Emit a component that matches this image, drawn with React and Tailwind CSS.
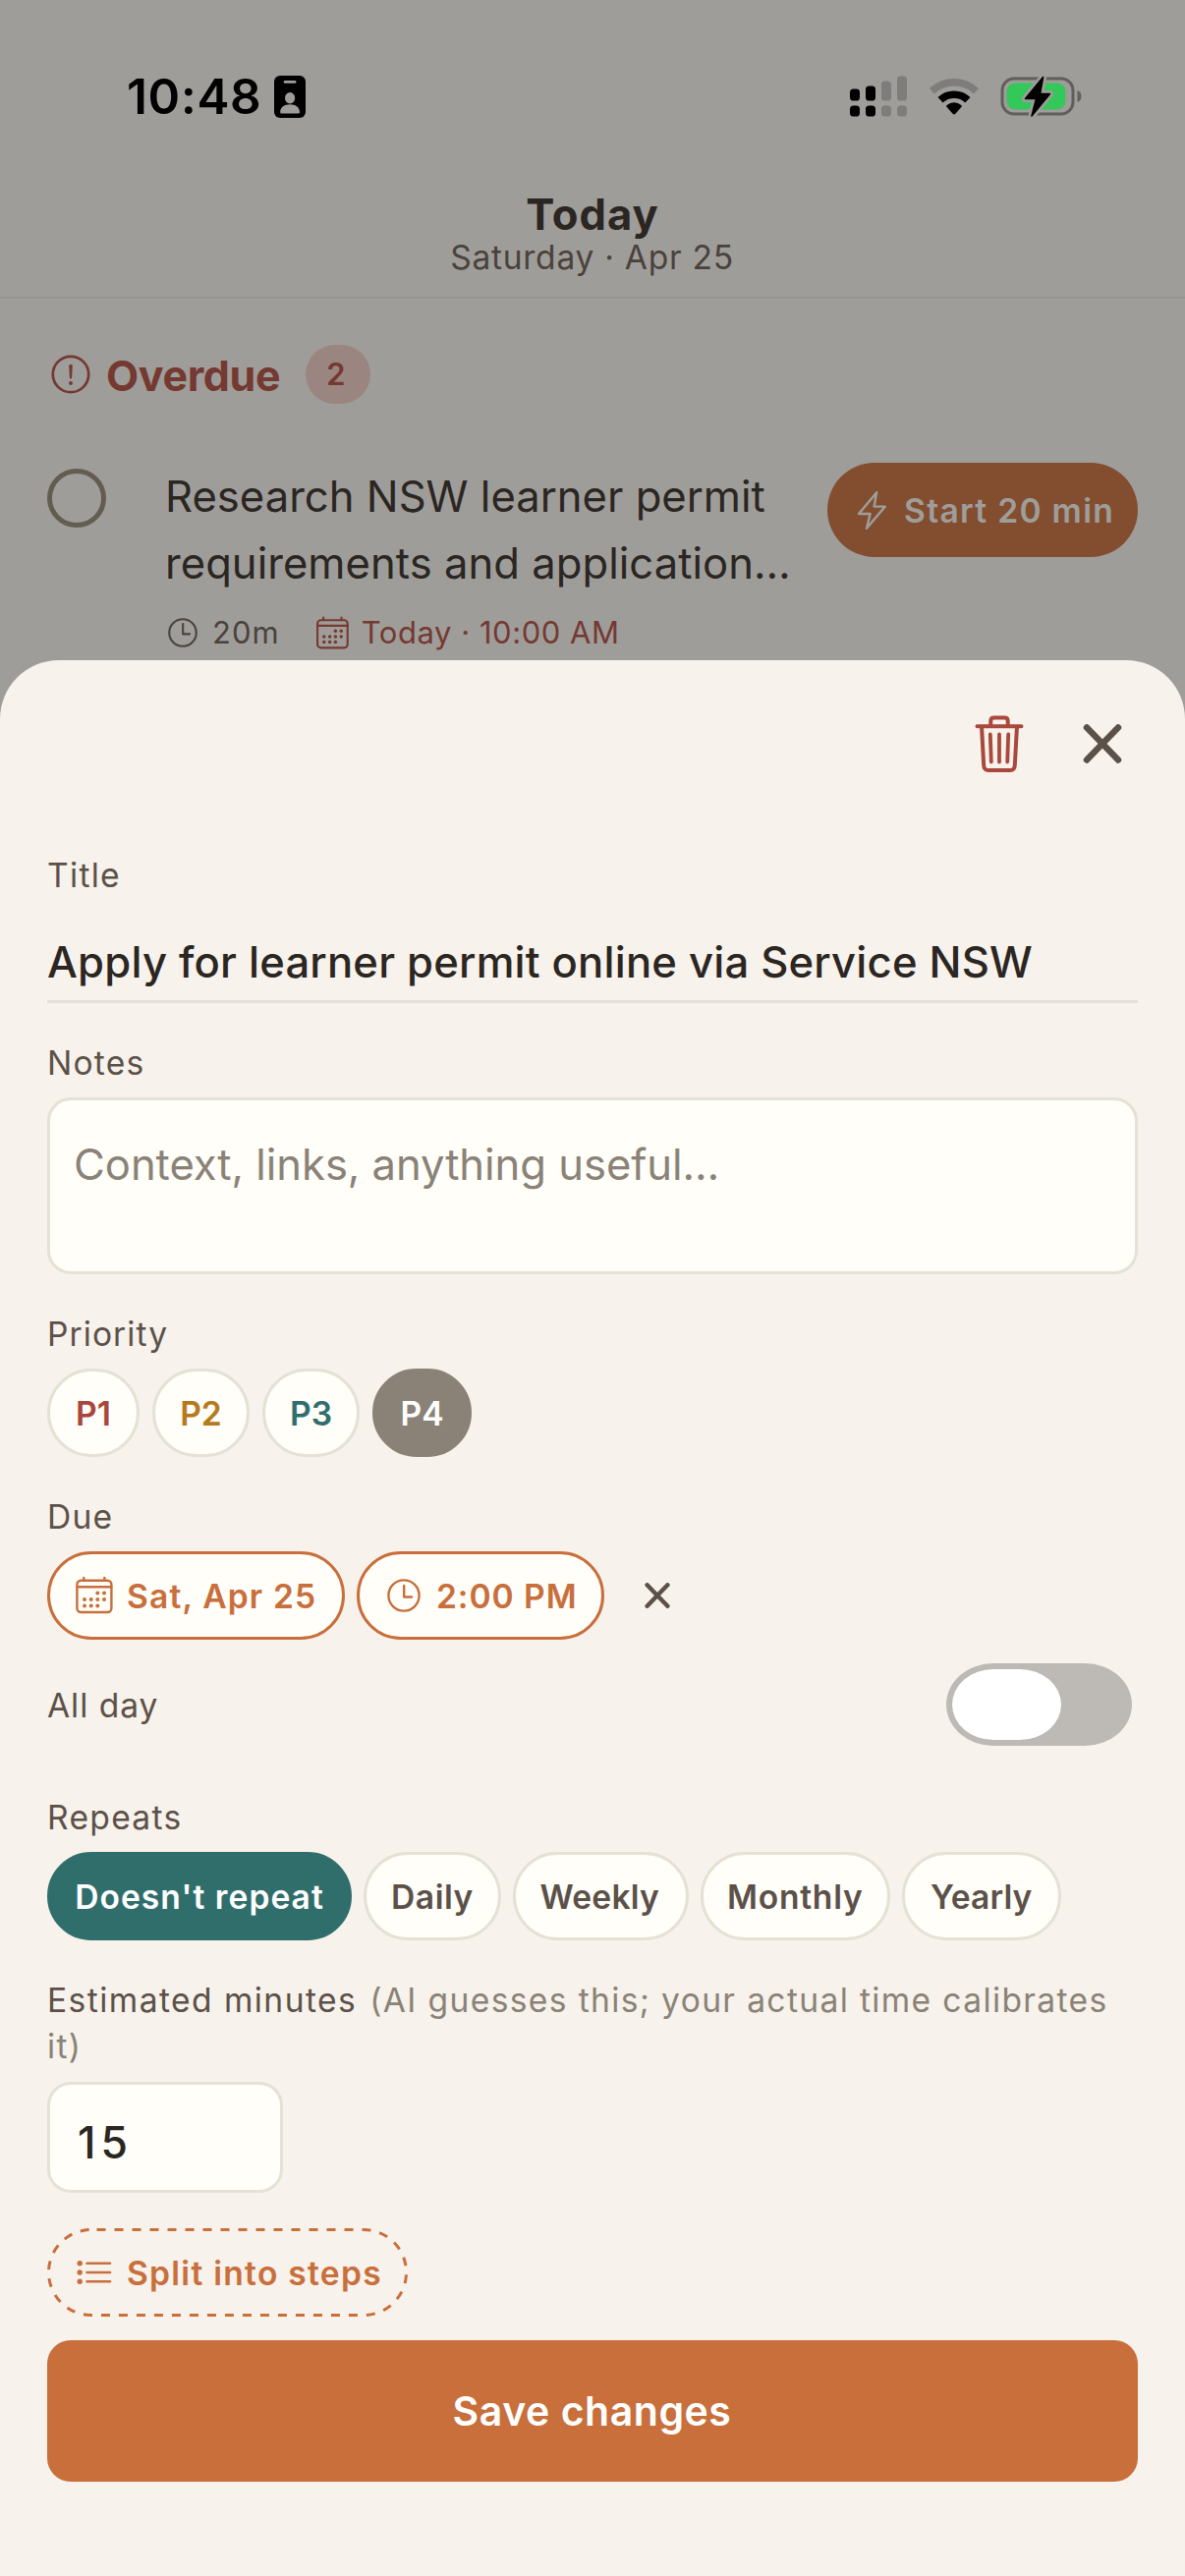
import React from "react";

function CalendarIcon({ className }) {
  return (
    <svg viewBox="0 0 40 40" className={className} fill="none" stroke="currentColor" strokeWidth="2.4">
      <rect x="2.4" y="4.8" width="35" height="32.2" rx="4" />
      <path d="M2.4 11.3h35M9.3 1.9v2.9M30.3 1.9v2.9" strokeLinecap="round" />
      <g fill="currentColor" stroke="none">
        {[[23.3, 17.4], [30, 17.4], [10, 24], [16.7, 24], [23.3, 24], [30, 24], [10, 30.4], [16.7, 30.4], [23.3, 30.4]].map(
          ([x, y]) => (
            <circle key={`${x}-${y}`} cx={x} cy={y} r="2" />
          )
        )}
      </g>
    </svg>
  );
}

function ClockIcon({ className }) {
  return (
    <svg viewBox="0 0 34 34" className={className} fill="none" stroke="currentColor" strokeWidth="2.4" strokeLinecap="round" strokeLinejoin="round">
      <circle cx="17" cy="17" r="15.6" />
      <path d="M17.2 7v11.5h7.8" />
    </svg>
  );
}

function CloseIcon({ className, strokeWidth }) {
  return (
    <svg viewBox="0 0 40 40" className={className} fill="none" stroke="currentColor" strokeWidth={strokeWidth} strokeLinecap="round">
      <path d="M4 3.5l32 33M36 3.5l-32 33" />
    </svg>
  );
}

function StatusBar() {
  return (
    <div className="flex h-[196px] items-center pl-[129px] pr-[104px] text-black">
      <span className="text-[49.5px] leading-[60px] font-semibold tracking-[0.67px]">10:48</span>
      <svg viewBox="0 0 32 43" className="ml-[13px] h-[43px] w-8">
        <rect width="32" height="43" rx="6" />
        <g fill="#9f9d9a">
          <rect x="9.7" y="5" width="12.8" height="2.8" rx="1.4" />
          <ellipse cx="16.1" cy="22.7" rx="5.1" ry="5.7" />
          <path d="M6.2 37c0-5 4.5-7.7 9.9-7.7S26 32 26 37c0 1-.6 1.6-1.6 1.6H7.8c-1 0-1.6-.6-1.6-1.6z" />
        </g>
      </svg>
      <svg viewBox="0 0 58 42" className="ml-auto h-[42px] w-[58px]">
        <g>
          <rect x="0" y="13.5" width="10" height="12" rx="3.6" />
          <rect x="16" y="10.5" width="10" height="15" rx="3.6" />
          <rect x="0" y="30.5" width="10" height="11" rx="3.6" />
          <rect x="16" y="30.5" width="10" height="11" rx="3.6" />
        </g>
        <g fill="#7f7d7b">
          <rect x="32" y="5.5" width="10" height="20" rx="3.6" />
          <rect x="48" y="0.5" width="10" height="25" rx="3.6" />
          <rect x="32" y="30.5" width="10" height="11" rx="3.6" />
          <rect x="48" y="30.5" width="10" height="11" rx="3.6" />
        </g>
      </svg>
      <svg viewBox="0 0 50 38" className="ml-[23px] h-[38px] w-[50px]" fill="none" strokeWidth="7.6">
        <path d="M2.4 13.7A33.2 33.2 0 0 1 47.6 13.7" stroke="#7f7d7b" />
        <path d="M11.1 22.7A20.4 20.4 0 0 1 38.9 22.7" stroke="#000" />
        <path d="M25 37.5c-.6 0-1-.3-1.4-.7l-6-6.8c-.7-.8-.6-1.5.1-2.1a11.5 11.5 0 0 1 14.6 0c.7.6.8 1.3.1 2.1l-6 6.8c-.4.4-.8.7-1.4.7z" fill="#000" />
      </svg>
      <svg viewBox="0 0 84 44" className="ml-[22px] h-11 w-[84px]">
        <rect x="2" y="4" width="72" height="36" rx="12" fill="none" stroke="#615f5d" strokeWidth="3" />
        <rect x="6.5" y="8.5" width="60" height="27" rx="8.5" fill="#34c759" />
        <path d="M78.5 16c2.6 1 4 3.3 4 6s-1.400 5-4 6z" fill="#615f5d" />
        <path d="M43.6 2.5L25.5 24.5h11L32 42l18.5-22.5H40.5z" fill="#000" stroke="#9f9d9a" strokeWidth="7" strokeLinejoin="round" />
        <path d="M43.6 2.5L25.5 24.5h11L32 42l18.5-22.5H40.5z" fill="#000" stroke="#000" strokeWidth="1.6" strokeLinejoin="round" />
      </svg>
    </div>
  );
}

function TodayScreen() {
  return (
    <div className="flex h-[672px] flex-col">
      <StatusBar />
      <header className="flex h-[108px] flex-col items-center border-b-2 border-[#969491] pt-px">
        <h1 className="text-[43.6px] leading-[44px] font-bold tracking-[1px] text-[#2b2622]">Today</h1>
        <p className="-mt-px pr-px text-[33.6px] leading-[44px] tracking-[0.72px] text-[#4a423c]">Saturday · Apr 25</p>
      </header>
      <div className="mt-[47px] flex h-[60px] items-center pl-[52px] text-[#743931]">
        <svg viewBox="0 0 40 40" className="size-10" fill="none" stroke="currentColor">
          <circle cx="20" cy="20" r="18.2" strokeWidth="2.7" />
          <path d="M18.2 11.5a1.8 1.8 0 0 1 3.6 0l-.7 12a1.1 1.1 0 0 1-2.2 0z" fill="currentColor" stroke="none" />
          <circle cx="20" cy="29" r="1.9" fill="currentColor" stroke="none" />
        </svg>
        <h2 className="ml-4 w-[177px] pt-px text-[43px] leading-[60px] font-bold tracking-[-0.35px] whitespace-nowrap">Overdue</h2>
        <span className="ml-[26px] flex h-[60px] w-[66px] items-center justify-center rounded-full bg-[#9b8580] pr-1 text-[31px] font-semibold">2</span>
      </div>
      <div className="mt-[60px] flex items-start pl-12 pr-12">
        <span className="mt-1.5 size-[60px] shrink-0 rounded-full border-5 border-[#635c51]" />
        <div className="ml-[60px] w-[673px] shrink-0 pt-px">
          <p className="text-[43.6px] leading-[68px] whitespace-nowrap text-[#2b2622]">
            <span className="block">Research NSW learner permit</span>
            <span className="block tracking-[0.02px]">requirements and application…</span>
          </p>
          <div className="mt-4 flex h-10 items-center pl-[3px] text-[31px] leading-10 text-[#4a423c]">
            <ClockIcon className="size-[30px]" />
            <span className="ml-[15px] tracking-[1.02px]">20m</span>
            <span className="ml-9 flex items-center text-[#743931]">
              <CalendarIcon className="size-[35px]" />
              <span className="ml-3 tracking-[0.54px]">Today · 10:00 AM</span>
            </span>
          </div>
        </div>
        <button className="ml-auto flex h-24 w-[316px] shrink-0 items-center rounded-full bg-[#824e2f] pl-[30px] text-[#9f9d9a]">
          <svg viewBox="0 0 32 42" className="h-[42px] w-8" fill="none" stroke="currentColor" strokeWidth="2.4" strokeLinejoin="round">
            <path d="M20.2 3.2L2 25h11.6L10 39.8 28.8 17.6H17.6z" />
          </svg>
          <span className="ml-4 pt-px text-[33.6px] leading-10 font-semibold tracking-[1.3px] whitespace-nowrap">Start 20 min</span>
        </button>
      </div>
    </div>
  );
}

function Label({ className, children }) {
  return <label className={`block text-[33.6px] leading-[46px] text-[#5c5149] ${className}`}>{children}</label>;
}

const priorities = [
  { name: "P1", style: "w-[94px] border-[#e5e1d5] bg-[#fffef9] text-[#a8483d]" },
  { name: "P2", style: "w-[99px] border-[#e5e1d5] bg-[#fffef9] text-[#b57a20]" },
  { name: "P3", style: "w-[99px] border-[#e5e1d5] bg-[#fffef9] text-[#2f6e6c]" },
  { name: "P4", style: "w-[101px] border-[#8b8277] bg-[#8b8277] text-white" },
];

const repeats = [
  { name: "Doesn't repeat", style: "w-[310px] border-[#306e6c] bg-[#306e6c] text-white tracking-[1.05px]" },
  { name: "Daily", style: "w-[140px] border-[#e5e1d5] bg-[#fffef9] text-[#5c5149] tracking-[0.53px]" },
  { name: "Weekly", style: "w-[178.5px] border-[#e5e1d5] bg-[#fffef9] text-[#5c5149] tracking-[0.2px] pr-0.5" },
  { name: "Monthly", style: "w-[193.5px] border-[#e5e1d5] bg-[#fffef9] text-[#5c5149] tracking-[0.75px]" },
  { name: "Yearly", style: "w-[161.5px] border-[#e5e1d5] bg-[#fffef9] text-[#5c5149] tracking-[0.1px]" },
];

function Chip({ style, children }) {
  return (
    <button className={`flex h-[90px] items-center justify-center rounded-full border-3 pt-0.5 text-[33.6px] leading-10 font-semibold whitespace-nowrap ${style}`}>
      {children}
    </button>
  );
}

function EditSheet() {
  return (
    <section className="flex h-[1950px] flex-col rounded-t-[60px] bg-[#f7f2eb] px-12">
      <div className="flex h-[170px] shrink-0 items-center justify-end pr-4">
        <svg viewBox="0 0 50 60" className="h-[60px] w-[50px] text-[#a9493e]" fill="none" stroke="currentColor" strokeWidth="4" strokeLinecap="round" strokeLinejoin="round">
          <path d="M2.5 12.2h45M7 12.2l2.2 39.8c.2 3.3 1.7 5 4.6 5h22.4c2.900 0 4.400-1.700 4.600-5L43 12.2M16.300 12V7c0-2 1.200-3.400 3.400-3.400h10.600c2.200 0 3.400 1.400 3.400 3.400v5" />
          <path d="M15.8 20.500l1 28M25 20.500v28M34.200 20.500l-1 28" strokeWidth="3.800" />
        </svg>
        <CloseIcon className="ml-[60px] size-10 text-[#5c5149]" strokeWidth={6.5} />
      </div>

      <Label className="mt-[26px] tracking-[1.3px]">Title</Label>
      <div className="border-b-3 border-[#e5e1d5] pt-9 pb-2 text-[43.6px] leading-[60px] font-medium tracking-[0.2px] whitespace-nowrap text-[#2b2622]">
        Apply for learner permit online via Service NSW
      </div>

      <Label className="mt-[38px] tracking-[1.2px]">Notes</Label>
      <div className="mt-3 h-[180px] rounded-3xl border-3 border-[#e5e1d5] bg-[#fffef9] pt-9 pl-6 text-[43.6px] leading-[60px] tracking-[-0.05px] text-[#8b8277]">
        Context, links, anything useful…
      </div>

      <Label className="mt-[38px] tracking-[1.05px]">Priority</Label>
      <div className="mt-3 flex gap-[13px]">
        {priorities.map((p) => (
          <Chip key={p.name} style={p.style}>{p.name}</Chip>
        ))}
      </div>

      <Label className="mt-[38px] tracking-[1.21px]">Due</Label>
      <div className="mt-3 flex items-center text-[33.6px] leading-10 font-semibold text-[#c86f3c]">
        <button className="flex h-[90px] w-[303px] items-center rounded-full border-3 border-[#c86f3c] bg-[#fffef9] pl-[25px]">
          <CalendarIcon className="size-10" />
          <span className="ml-[13px] pt-0.5 tracking-[1.14px] whitespace-nowrap">Sat, Apr 25</span>
        </button>
        <button className="ml-3 flex h-[90px] w-[252px] items-center rounded-full border-3 border-[#c86f3c] bg-[#fffef9] pl-7">
          <ClockIcon className="size-[34px]" />
          <span className="ml-4 pt-0.5 tracking-[0.93px] whitespace-nowrap">2:00 PM</span>
        </button>
        <CloseIcon className="ml-[41px] size-[26px] text-[#5c5149]" strokeWidth={6.8} />
      </div>

      <div className="mt-6 flex h-[84px] items-center justify-between pr-1.5">
        <Label className="pt-0.5 tracking-[0.95px]">All day</Label>
        <button className="flex h-[84px] w-[189px] items-center rounded-[48px/42px] bg-[#bdb9b4] pl-1.5">
          <span className="h-[72px] w-[111px] rounded-[42px/36px] bg-white" />
        </button>
      </div>

      <Label className="mt-[50px] tracking-[1.3px]">Repeats</Label>
      <div className="mt-3 flex gap-3">
        {repeats.map((r) => (
          <Chip key={r.name} style={r.style}>{r.name}</Chip>
        ))}
      </div>

      <label className="mt-[37px] block text-[33.6px] leading-[47px] text-[#8b8277]">
        <span className="flex gap-[13px] whitespace-nowrap">
          <span className="tracking-[1.44px] text-[#5c5149]">Estimated minutes</span>
          <span className="tracking-[1.36px]">(AI guesses this; your actual time calibrates</span>
        </span>
        <span className="block tracking-[1.36px]">it)</span>
      </label>
      <div className="mt-[13px] flex h-[113px] w-60 items-center rounded-3xl border-3 border-[#e5e1d5] bg-[#fffef9] pt-[10px] pl-7 text-[44.5px] leading-[60px] font-medium tracking-[5px] text-[#2b2622]">
        15
      </div>

      <button className="relative mt-9 flex h-[90px] w-[367px] shrink-0 items-center pl-7 text-[#c86f3c]">
        <svg viewBox="0 0 367 90" className="absolute inset-0 h-[90px] w-[367px]" fill="none">
          <rect x="1.5" y="1.5" width="364" height="87" rx="43.5" stroke="currentColor" strokeWidth="3" strokeDasharray="9 9" strokeDashoffset="-5.5" />
        </svg>
        <svg viewBox="0 0 40 26" className="h-[26px] w-10" fill="currentColor" stroke="currentColor" strokeWidth="2.6" strokeLinecap="round">
          <path d="M12.5 3.7h23.5M12.5 13h23.500M12.5 22.300h23.500" />
          <g stroke="none">
            <circle cx="5.2" cy="3.7" r="2.7" />
            <circle cx="5.2" cy="13" r="2.7" />
            <circle cx="5.2" cy="22.3" r="2.7" />
          </g>
        </svg>
        <span className="ml-[13px] pt-0.5 text-[33.6px] leading-10 font-semibold tracking-[1.26px] whitespace-nowrap">Split into steps</span>
      </button>

      <button className="mt-6 h-36 shrink-0 rounded-3xl bg-[#c86f3c] pr-px text-[41px] leading-[60px] font-semibold tracking-[0.53px] text-white">
        Save changes
      </button>
    </section>
  );
}

export default function App() {
  return (
    <main className="h-[2622px] w-[1206px] overflow-hidden bg-[#9f9d9a] font-['Inter',sans-serif]">
      <TodayScreen />
      <EditSheet />
    </main>
  );
}
